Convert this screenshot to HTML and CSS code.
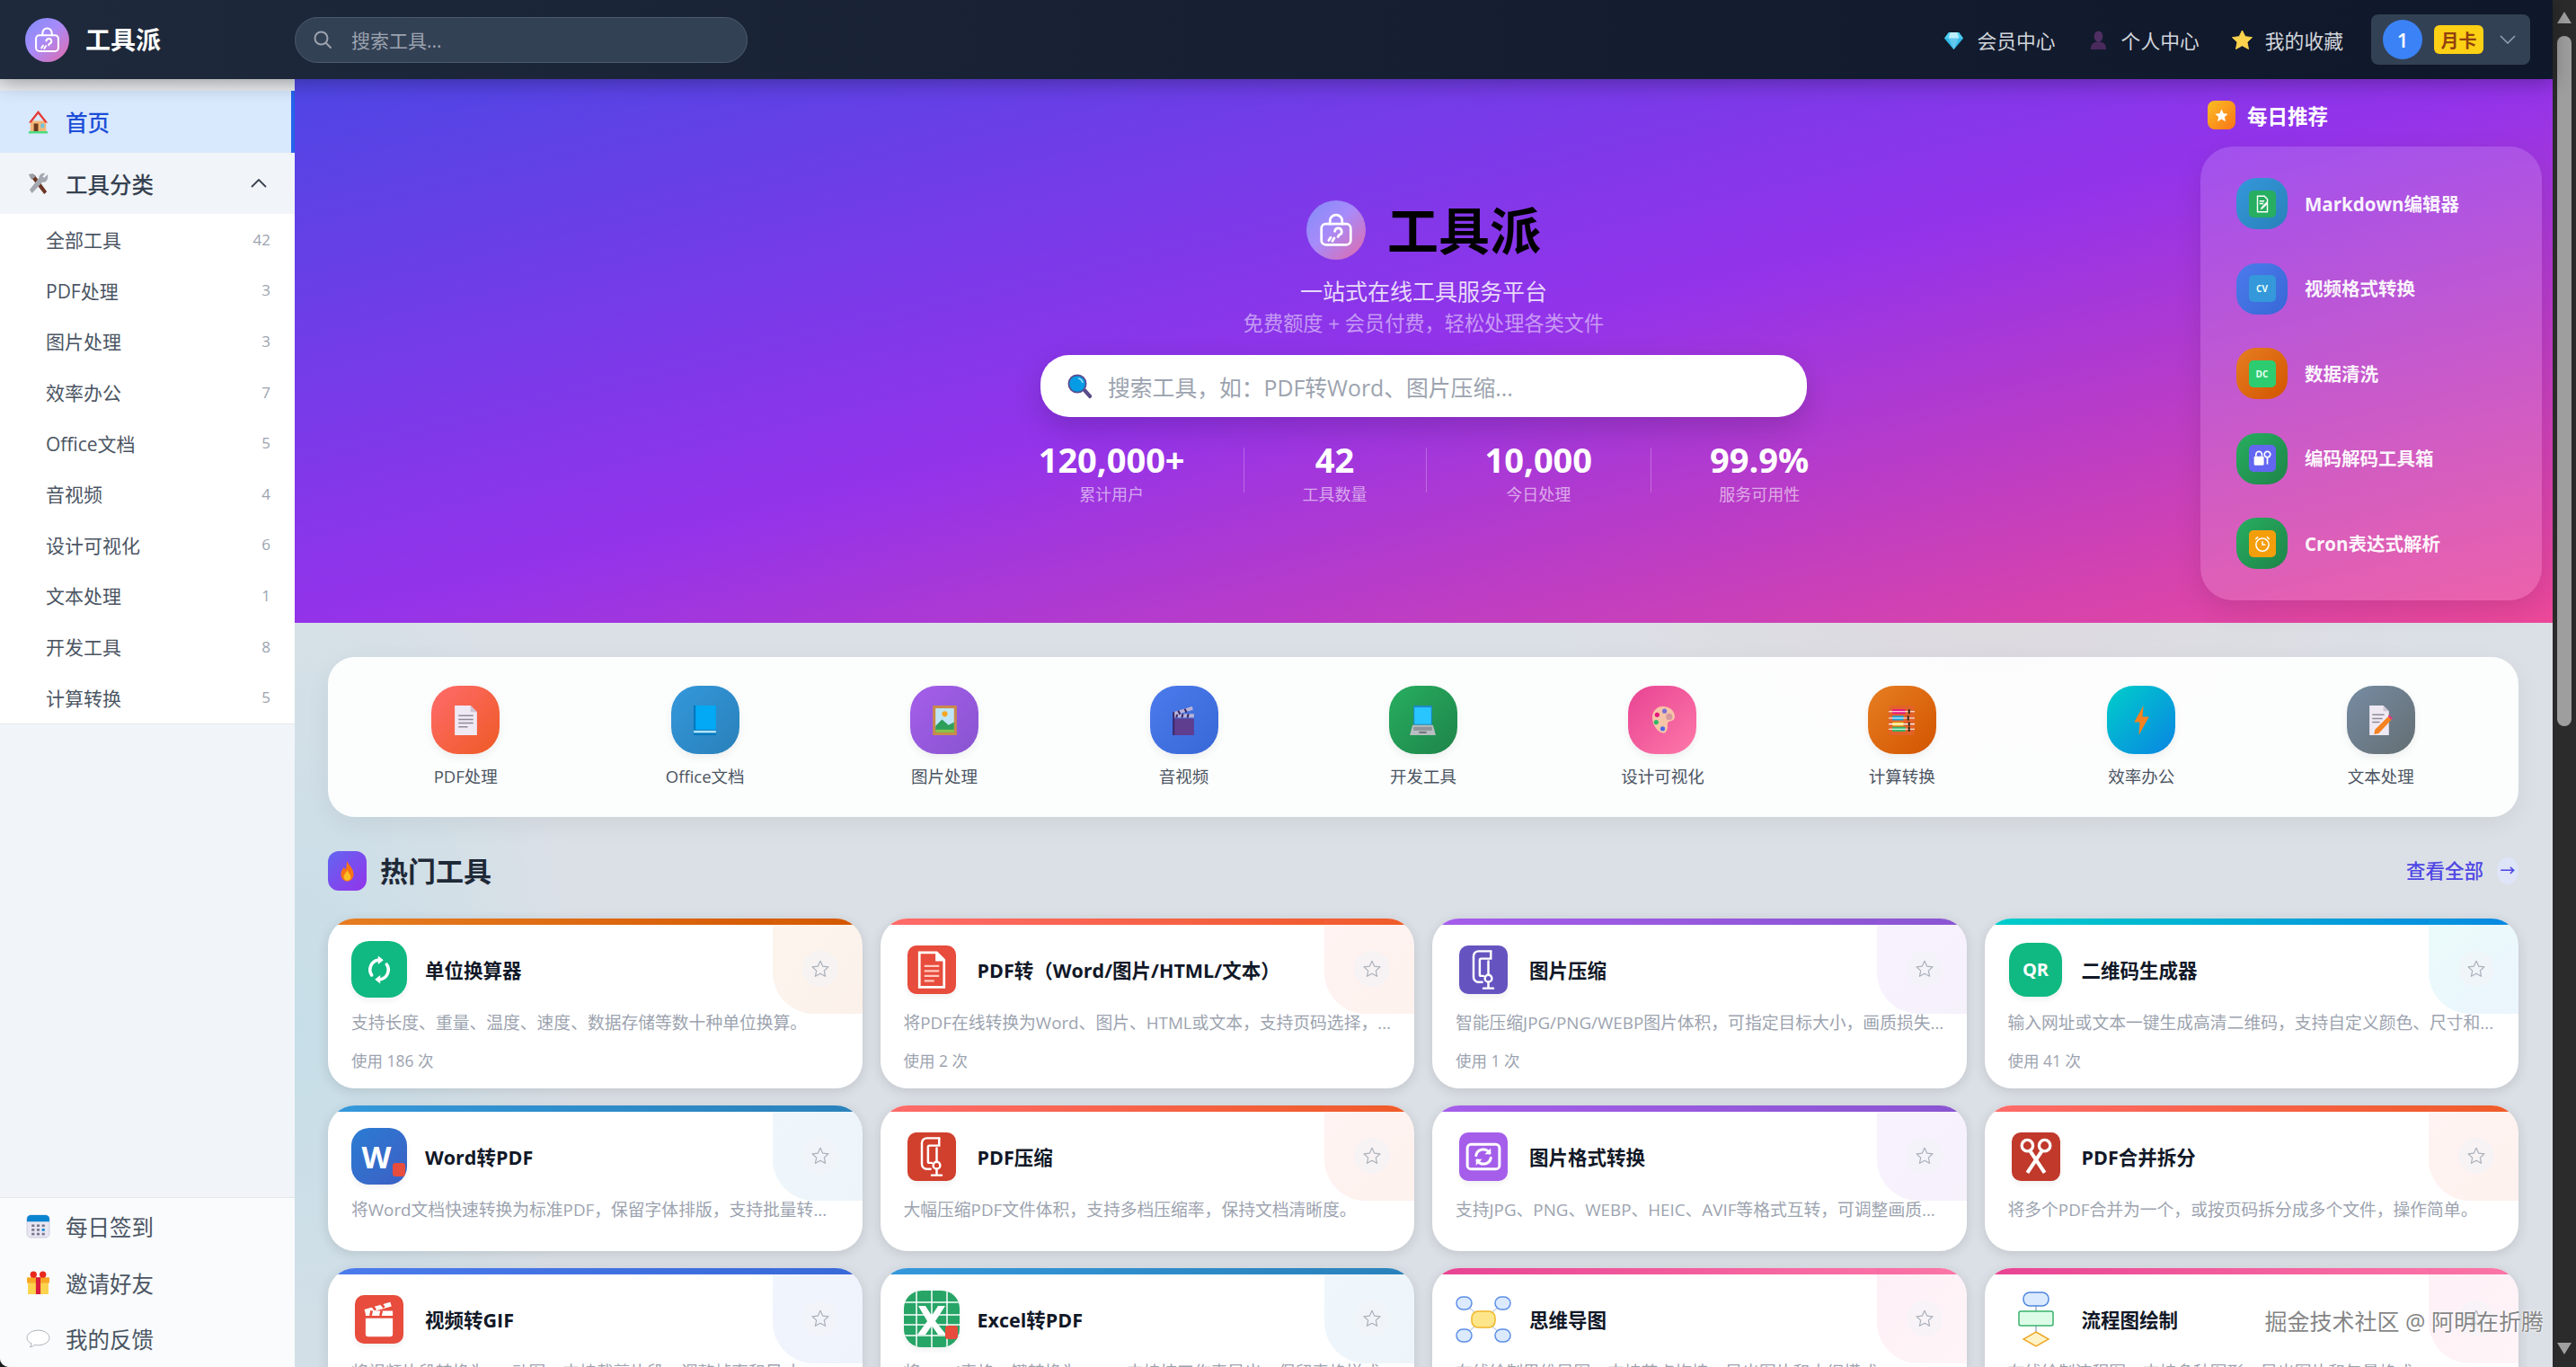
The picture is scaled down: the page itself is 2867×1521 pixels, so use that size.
FILE: index.html
```html
<!DOCTYPE html>
<html lang="zh-CN">
<head>
    <title>工具派</title>
    <meta charset="utf-8">
    <link rel="stylesheet" href="styles.css">
</head>
<body>
<svg class="sprite" xmlns="http://www.w3.org/2000/svg">
    <symbol id="i-logo" viewBox="0 0 28 28">
        <g fill="none" stroke="#fff" stroke-width="2" stroke-linecap="round">
            <rect x="2" y="9" width="24" height="17" rx="3.5"/>
            <path d="M9 9V6.500a5 5 0 0 1 10 0V9"/>
            <path d="M13 15a2.800 2.800 0 1 1 3.500 3l-1 1.500M8 22.500l1.500-2.500M11 23l1.500-2.500"/>
        </g>
    </symbol>
    <symbol id="i-star" viewBox="0 0 24 24">
        <path d="M12 2.500l2.900 6.300 6.900.8-5.100 4.700 1.400 6.800-6.100-3.400-6.100 3.400 1.400-6.800-5.100-4.700 6.900-.8z" fill="none" stroke="#aab0ba" stroke-width="1.300" stroke-linejoin="round"/>
    </symbol>
    <symbol id="i-clamp" viewBox="0 0 32 32">
        <g fill="none" stroke="#fff" stroke-width="1.800" stroke-linecap="round">
            <path d="M22 1h-10a4 4 0 0 0-4 4v17a4 4 0 0 0 4 4h3"/>
            <path d="M22 1v6h-8a1 1 0 0 0-1 1v12a1 1 0 0 0 1 1h2"/>
            <path d="M20 9v11"/>
            <circle cx="20" cy="23" r="2.800"/>
            <path d="M20 26v4M16 31h8"/>
        </g>
    </symbol>
</svg>

<div class="app">
<div class="page">
    <header class="topbar">
        <div class="brand">
            <span class="logo-dot"><svg class="logo-glyph"><use href="#i-logo"/></svg></span>
            <span class="brand-name">工具派</span>
        </div>
        <div class="top-search">
            <svg class="top-search-icon" viewBox="0 0 24 24" fill="none" stroke="#9ca3af" stroke-width="2" stroke-linecap="round"><circle cx="10.500" cy="10.500" r="7"/><path d="M16 16l5 5"/></svg>
            <span>搜索工具...</span>
        </div>
        <nav class="top-links">
            <a class="top-link">
                <svg viewBox="0 0 24 24"><path d="M6 3h12l5 7-11 13L1 10z" fill="#4fd0f5"/><path d="M8 3h8l2 7-6 13-6-13z" fill="#bdefff"/><path d="M1 10h22l-11 13z" fill="#1aa8e0" opacity=".55"/></svg>
                会员中心
            </a>
            <a class="top-link">
                <svg viewBox="0 0 24 24"><ellipse cx="12" cy="8" rx="5" ry="6.500" fill="#4f2f63"/><path d="M3 23c0-6 3-9 9-9s9 3 9 9z" fill="#4a2a5c"/></svg>
                个人中心
            </a>
            <a class="top-link">
                <svg viewBox="0 0 24 24"><path d="M12 1l3.500 7 8 1-5.800 5.500 1.600 8-7.300-4-7.300 4 1.600-8L.5 9l8-1z" fill="#fcd34d" stroke="#fcd34d" stroke-linejoin="round"/></svg>
                我的收藏
            </a>
        </nav>
        <div class="user-box">
            <span class="avatar">1</span>
            <span class="plan">月卡</span>
            <svg class="user-caret" viewBox="0 0 18 10" fill="none" stroke="#94a3b8" stroke-width="1.500"><path d="M1 1l8 8 8-8"/></svg>
        </div>
    </header>

    <div class="layout">
        <aside class="sidebar">
            <div class="side-top">
                <a class="side-home">
                    <svg class="side-icon" viewBox="0 0 28 28"><path d="M5 13h18v12H5z" fill="#f3b577"/><path d="M14 1L3 15h3l8-10 8 10h3z" fill="#e53935"/><path d="M9 16h5v9H9z" fill="#6d3b1f"/><path d="M17 16h4v5h-4z" fill="#6fc3df"/><path d="M3 25h22v2.500H3z" fill="#4ade80"/></svg>
                    首页
                </a>
                <div class="side-group">
                    <svg class="side-icon" viewBox="0 0 28 28"><path d="M4 3l6 1 14 19-3 3L7 8z" fill="#6d3524"/><path d="M25 3l-4 4-2-1 3-4c-3-1-7 1-7 5l-11 14 3 4 12-13c4 1 7-3 6-9z" fill="#a4a8b0"/><path d="M3 3l5-1 3 4-5 3z" fill="#9b9ea6"/></svg>
                    <span class="side-group-name">工具分类</span>
                    <svg class="side-caret" viewBox="0 0 18 10" fill="none" stroke="#374151" stroke-width="1.800"><path d="M1 9l8-8 8 8"/></svg>
                </div>
                <ul class="side-list">
                    <li><span>全部工具</span><em>42</em></li>
                    <li><span>PDF处理</span><em>3</em></li>
                    <li><span>图片处理</span><em>3</em></li>
                    <li><span>效率办公</span><em>7</em></li>
                    <li><span>Office文档</span><em>5</em></li>
                    <li><span>音视频</span><em>4</em></li>
                    <li><span>设计可视化</span><em>6</em></li>
                    <li><span>文本处理</span><em>1</em></li>
                    <li><span>开发工具</span><em>8</em></li>
                    <li><span>计算转换</span><em>5</em></li>
                </ul>
            </div>
            <div class="side-foot">
                <a class="foot-link">
                    <svg class="side-icon" viewBox="0 0 26 26"><rect x="1" y="1" width="24" height="24" rx="4" fill="#e9e6f2" stroke="#c9c6d6" stroke-width=".8"/><path d="M1 8V5a4 4 0 0 1 4-4h16a4 4 0 0 1 4 4v3z" fill="#0a84d0"/><g fill="#77758c"><rect x="6" y="11" width="3" height="2.500"/><rect x="11.500" y="11" width="3" height="2.500"/><rect x="17" y="11" width="3" height="2.500"/><rect x="6" y="15.500" width="3" height="2.500"/><rect x="11.500" y="15.500" width="3" height="2.500"/><rect x="6" y="20" width="3" height="2.500"/><rect x="11.500" y="20" width="3" height="2.500"/><rect x="17" y="20" width="3" height="2.500"/></g><rect x="17" y="15.500" width="3" height="2.500" fill="#0a84d0"/></svg>
                    每日签到
                </a>
                <a class="foot-link">
                    <svg class="side-icon" viewBox="0 0 26 26"><path d="M2 12h22v13H2z" fill="#fcd34d"/><path d="M1 7h24v6H1z" fill="#f9a825"/><path d="M10.500 7h5v18h-5z" fill="#d81b3c"/><circle cx="8" cy="4" r="3.500" fill="#e8291c"/><circle cx="18" cy="4" r="3.500" fill="#e8291c"/></svg>
                    邀请好友
                </a>
                <a class="foot-link">
                    <svg class="side-icon" viewBox="0 0 26 26"><path d="M13 4C6.500 4 1 7.500 1 12c0 2.800 2 5 5 6.300-.2 1.500-1 2.600-1.800 3.500 2.200-.1 4-1 5.400-2.300 1.100.3 2.200.5 3.400.5 6.500 0 12-3.500 12-8S19.500 4 13 4z" fill="#fff" stroke="#a8acb4" stroke-width=".9"/></svg>
                    我的反馈
                </a>
            </div>
        </aside>

        <main class="main">
            <section class="hero">
                <div class="hero-title">
                    <span class="hero-logo"><svg class="hero-glyph"><use href="#i-logo"/></svg></span>
                    <h1>工具派</h1>
                </div>
                <p class="hero-sub">一站式在线工具服务平台</p>
                <p class="hero-note">免费额度 + 会员付费，轻松处理各类文件</p>
                <div class="hero-search">
                    <svg viewBox="0 0 28 28"><path d="M17 19l3-3 7 8c1 1.500-1.500 4-3 3z" fill="#5b4b8a"/><circle cx="11" cy="11" r="10.500" fill="#5b4b8a"/><circle cx="11" cy="11" r="8.800" fill="#059be5"/><path d="M12 5a6 6 0 0 1 5 5" stroke="#9fe0ff" stroke-width="1.500" fill="none"/></svg>
                    <span>搜索工具，如：PDF转Word、图片压缩...</span>
                </div>
                <div class="stats">
                    <div class="stat"><b>120,000+</b><span>累计用户</span></div>
                    <i class="stat-line"></i>
                    <div class="stat"><b>42</b><span>工具数量</span></div>
                    <i class="stat-line"></i>
                    <div class="stat"><b>10,000</b><span>今日处理</span></div>
                    <i class="stat-line"></i>
                    <div class="stat"><b>99.9%</b><span>服务可用性</span></div>
                </div>

                <div class="daily">
                    <div class="daily-head">
                        <span class="daily-star"><svg viewBox="0 0 24 24"><path d="M12 3l2.700 6 6.300.7-4.700 4.300 1.300 6.400-5.600-3.200-5.600 3.200 1.300-6.400L3 9.700 9.300 9z" fill="#fff"/></svg></span>
                        每日推荐
                    </div>
                    <div class="daily-panel">
                        <a class="daily-item">
                            <span class="daily-icon g-blue"><span class="daily-mark mark-green"><svg viewBox="0 0 20 20" fill="none" stroke="#fff" stroke-width="1.300"><path d="M5 2h7l3 3v13H5z"/><path d="M7 7h5M7 9.500h4"/><path d="M8 16l1-3 5-5 1.500 1.500-5 5z" fill="#fff" stroke="none"/></svg></span></span>
                            Markdown编辑器
                        </a>
                        <a class="daily-item">
                            <span class="daily-icon g-indigo"><span class="daily-mark mark-sky">CV</span></span>
                            视频格式转换
                        </a>
                        <a class="daily-item">
                            <span class="daily-icon g-orange"><span class="daily-mark mark-mint">DC</span></span>
                            数据清洗
                        </a>
                        <a class="daily-item">
                            <span class="daily-icon g-green"><span class="daily-mark mark-violet"><svg viewBox="0 0 20 20" fill="#fff"><rect x="1.500" y="8" width="10" height="9" rx="1"/><path d="M3.500 8V6a3 3 0 0 1 6 0v2" fill="none" stroke="#fff" stroke-width="1.500"/><circle cx="15" cy="6" r="3" fill="none" stroke="#fff" stroke-width="1.500"/><path d="M14.200 8.500h1.600V16h-1.600z"/></svg></span></span>
                            编码解码工具箱
                        </a>
                        <a class="daily-item">
                            <span class="daily-icon g-green"><span class="daily-mark mark-amber"><svg viewBox="0 0 20 20" fill="none" stroke="#fff" stroke-width="1.400"><circle cx="10" cy="11" r="6.500"/><path d="M10 7.500V11h3M3 5.500L5.500 3M17 5.500L14.500 3"/></svg></span></span>
                            Cron表达式解析
                        </a>
                    </div>
                </div>
            </section>

            <div class="content">
                <section class="quick">
                    <a class="quick-item">
                        <span class="quick-icon g-red"><svg viewBox="0 0 32 32"><path d="M4 0h17l7 7v25H4z" fill="#efe9f3"/><path d="M21 0l7 7h-7z" fill="#cdc4d6"/><path d="M8 11h16M8 15h16M8 19h16M8 23h10" stroke="#8f8a99" stroke-width="1.500"/></svg></span>
                        <span class="quick-name">PDF处理</span>
                    </a>
                    <a class="quick-item">
                        <span class="quick-icon g-blue"><svg viewBox="0 0 32 32"><path d="M4 0h24v32H4z" fill="#0277bd"/><path d="M6 0h22v26H6z" fill="#03a9f4"/><path d="M4 27h24v2.500H4z" fill="#b3e5fc"/></svg></span>
                        <span class="quick-name">Office文档</span>
                    </a>
                    <a class="quick-item">
                        <span class="quick-icon g-purple"><svg viewBox="0 0 32 32"><path d="M3 0h26v32H3z" fill="#c98a4b"/><path d="M6 3h20v26H6z" fill="#bfe6f7"/><circle cx="16" cy="9" r="3" fill="#f5a623"/><path d="M6 22l7-7 7 6 6-3v11H6z" fill="#2e9e5b"/><path d="M6 26h20v3H6z" fill="#8bc34a"/></svg></span>
                        <span class="quick-name">图片处理</span>
                    </a>
                    <a class="quick-item">
                        <span class="quick-icon g-indigo"><svg viewBox="0 0 32 32"><path d="M5 14h22v18H5z" fill="#5f3d8f"/><path d="M5 9h22v4H5z" fill="#b9b3d6"/><path d="M9 9l-1 4M15 9l-1 4M21 9l-1 4" stroke="#39276b" stroke-width="2"/><path d="M5 7l20-6 1 3.500-20 6z" fill="#b9b3d6"/><path d="M10 5.500l2 4M17 3.500l2 4" stroke="#39276b" stroke-width="2"/><path d="M4 7h2v25H4z" fill="#39276b"/></svg></span>
                        <span class="quick-name">音视频</span>
                    </a>
                    <a class="quick-item">
                        <span class="quick-icon g-green"><svg viewBox="0 0 32 32"><path d="M6 0h20v21H6z" fill="#1e88c9"/><path d="M7 2h18v18H7z" fill="#29c5ff"/><path d="M5 21h22l3 11H2z" fill="#b8bec2"/><path d="M6 23h20v4H6z" fill="#8e9498"/><path d="M12 28h8v2h-8z" fill="#70767a"/></svg></span>
                        <span class="quick-name">开发工具</span>
                    </a>
                    <a class="quick-item">
                        <span class="quick-icon g-pink"><svg viewBox="0 0 32 32"><path d="M16 1c8 0 13 5 13 11 0 5-5 4-7 6-2 2 1 7-3 11-4 3-13-4-14-14C4 7 9 1 16 1z" fill="#f7c4a8"/><circle cx="18" cy="6" r="2.500" fill="#7c6fd6"/><circle cx="10" cy="10" r="2.500" fill="#e6157d"/><circle cx="9" cy="18" r="2.500" fill="#2fb86a"/><circle cx="16" cy="25" r="2.500" fill="#4a6ae8"/><circle cx="23" cy="12" r="3.500" fill="#d89aa0"/></svg></span>
                        <span class="quick-name">设计可视化</span>
                    </a>
                    <a class="quick-item">
                        <span class="quick-icon g-orange"><svg viewBox="0 0 32 32"><rect x="2" y="0" width="28" height="32" rx="4" fill="#e2622a"/><path d="M6 4h14v5H6z" fill="#e6157d"/><path d="M6 11h12v5H6z" fill="#1aa0d8"/><path d="M6 18h12v4H6z" fill="#f5cf3a"/><path d="M6 23h14v5H6z" fill="#2fb86a"/><path d="M2 6.500h28M2 13.500h28M2 20h28M2 25.500h28" stroke="#fff" stroke-width="1"/><path d="M24 4v5M23 11v5M24 18v4M24 23v5" stroke="#3b2a1a" stroke-width="2"/></svg></span>
                        <span class="quick-name">计算转换</span>
                    </a>
                    <a class="quick-item">
                        <span class="quick-icon g-teal"><svg viewBox="0 0 32 32"><path d="M18 0L8 18h6l-1 14 11-20h-7z" fill="#f58220"/></svg></span>
                        <span class="quick-name">效率办公</span>
                    </a>
                    <a class="quick-item">
                        <span class="quick-icon g-slate"><svg viewBox="0 0 32 32"><path d="M4 0h15l6 6v26H4z" fill="#efe9f3"/><path d="M19 0l6 6h-6z" fill="#cdc4d6"/><path d="M7 10h13M7 14h11M7 18h8" stroke="#8f8a99" stroke-width="1.500"/><path d="M25 10l4 3.500-1.500 2L24 12z" fill="#e6357d"/><path d="M24 12l3.500 3.500L14 30l-5 1 1-5z" fill="#f58220"/></svg></span>
                        <span class="quick-name">文本处理</span>
                    </a>
                </section>

                <div class="section-head">
                    <span class="section-mark"><svg viewBox="0 0 24 32"><path d="M12 1c1 6 9 10 9 19 0 6-4 10-9 10s-9-4-9-10c0-5 3-7 4-10 1 2 2 3 3 3 1-4 1-8 2-12z" fill="#f97316"/><path d="M12 14c1 4 5 6 5 10 0 3-2 5-5 5s-5-2-5-5c0-4 4-6 5-10z" fill="#fbbf24"/></svg></span>
                    <h2>热门工具</h2>
                    <a class="see-all">查看全部<span class="see-all-arrow">→</span></a>
                </div>

                <div class="tool-grid">
                    <article class="tool-card g-orange">
                        <div class="tool-head">
                            <span class="tool-icon"><span class="tool-tile tile-full tile-emerald"><svg viewBox="0 0 32 32" fill="none" stroke="#fff" stroke-width="3" stroke-linecap="round"><path d="M9 21a9 9 0 0 1 6-14"/><path d="M23 11a9 9 0 0 1-6 14"/><path d="M15 3v8l5-4zM17 29v-8l-5 4z" fill="#fff" stroke="none"/></svg></span></span>
                            <h3>单位换算器</h3>
                        </div>
                        <p class="tool-desc">支持长度、重量、温度、速度、数据存储等数十种单位换算。</p>
                        <p class="tool-meta">使用 186 次</p>
                        <span class="fav"><svg><use href="#i-star"/></svg></span>
                    </article>
                    <article class="tool-card g-red">
                        <div class="tool-head">
                            <span class="tool-icon"><span class="tool-tile tile-red"><svg viewBox="0 0 32 32" fill="none" stroke="#fff" stroke-width="2"><path d="M6 2h14l6 6v22H6z"/><path d="M20 2v6h6" fill="#fff"/><path d="M10 13h12M10 17h12M10 21h12M10 25h8" stroke="#ffc9bf" stroke-width="1.600"/></svg></span></span>
                            <h3>PDF转（Word/图片/HTML/文本）</h3>
                        </div>
                        <p class="tool-desc">将PDF在线转换为Word、图片、HTML或文本，支持页码选择，...</p>
                        <p class="tool-meta">使用 2 次</p>
                        <span class="fav"><svg><use href="#i-star"/></svg></span>
                    </article>
                    <article class="tool-card g-purple">
                        <div class="tool-head">
                            <span class="tool-icon"><span class="tool-tile tile-iris"><svg><use href="#i-clamp"/></svg></span></span>
                            <h3>图片压缩</h3>
                        </div>
                        <p class="tool-desc">智能压缩JPG/PNG/WEBP图片体积，可指定目标大小，画质损失...</p>
                        <p class="tool-meta">使用 1 次</p>
                        <span class="fav"><svg><use href="#i-star"/></svg></span>
                    </article>
                    <article class="tool-card g-teal">
                        <div class="tool-head">
                            <span class="tool-icon"><span class="tool-tile tile-full tile-emerald tile-qr">QR</span></span>
                            <h3>二维码生成器</h3>
                        </div>
                        <p class="tool-desc">输入网址或文本一键生成高清二维码，支持自定义颜色、尺寸和...</p>
                        <p class="tool-meta">使用 41 次</p>
                        <span class="fav"><svg><use href="#i-star"/></svg></span>
                    </article>

                    <article class="tool-card g-blue">
                        <div class="tool-head">
                            <span class="tool-icon"><span class="tool-tile tile-full tile-word">W<i class="tile-dot"></i></span></span>
                            <h3>Word转PDF</h3>
                        </div>
                        <p class="tool-desc">将Word文档快速转换为标准PDF，保留字体排版，支持批量转...</p>
                        <span class="fav"><svg><use href="#i-star"/></svg></span>
                    </article>
                    <article class="tool-card g-red">
                        <div class="tool-head">
                            <span class="tool-icon"><span class="tool-tile tile-brick"><svg><use href="#i-clamp"/></svg></span></span>
                            <h3>PDF压缩</h3>
                        </div>
                        <p class="tool-desc">大幅压缩PDF文件体积，支持多档压缩率，保持文档清晰度。</p>
                        <span class="fav"><svg><use href="#i-star"/></svg></span>
                    </article>
                    <article class="tool-card g-purple">
                        <div class="tool-head">
                            <span class="tool-icon"><span class="tool-tile tile-violet"><svg viewBox="0 0 32 32" fill="none" stroke="#fff" stroke-width="2.200"><rect x="3" y="6" width="26" height="20" rx="3"/><path d="M10 15a6 6 0 0 1 11-2M22 17a6 6 0 0 1-11 2" stroke-linecap="round"/><path d="M22 9v5h-5zM10 23v-5h5z" fill="#fff" stroke="none"/></svg></span></span>
                            <h3>图片格式转换</h3>
                        </div>
                        <p class="tool-desc">支持JPG、PNG、WEBP、HEIC、AVIF等格式互转，可调整画质...</p>
                        <span class="fav"><svg><use href="#i-star"/></svg></span>
                    </article>
                    <article class="tool-card g-red">
                        <div class="tool-head">
                            <span class="tool-icon"><span class="tool-tile tile-crimson"><svg viewBox="0 0 32 32" fill="none" stroke="#fff" stroke-width="2.400"><circle cx="9" cy="7" r="4.500"/><circle cx="23" cy="7" r="4.500"/><path d="M11 11l12 18M21 11L9 29" stroke-width="3"/></svg></span></span>
                            <h3>PDF合并拆分</h3>
                        </div>
                        <p class="tool-desc">将多个PDF合并为一个，或按页码拆分成多个文件，操作简单。</p>
                        <span class="fav"><svg><use href="#i-star"/></svg></span>
                    </article>

                    <article class="tool-card g-indigo">
                        <div class="tool-head">
                            <span class="tool-icon"><span class="tool-tile tile-red"><svg viewBox="0 0 32 32" fill="#fff"><path d="M5 15h22v13a2 2 0 0 1-2 2H7a2 2 0 0 1-2-2z"/><path d="M5 9h22v4H5z"/><path d="M4 8l21-6 1 3.500-21 6z"/><path d="M10 4.500l3 4M17 2.500l3 4M10 9l-1 4M18 9l-1 4" stroke="#e74c3c" stroke-width="2"/></svg></span></span>
                            <h3>视频转GIF</h3>
                        </div>
                        <p class="tool-desc">将视频片段转换为GIF动图，支持裁剪片段，调整帧率和尺寸。</p>
                        <span class="fav"><svg><use href="#i-star"/></svg></span>
                    </article>
                    <article class="tool-card g-blue">
                        <div class="tool-head">
                            <span class="tool-icon"><span class="tool-tile tile-full tile-excel"><svg viewBox="0 0 62 63"><path d="M0 13h62M0 27h62M0 38h62M0 50h62M14 0v63M31 0v63M48 0v63" stroke="#fff" stroke-width="1.500"/><path d="M16 17h8l7 11 7-11h8L35 34l12 15h-9l-7-10-7 10h-9l11-15z" fill="#fff"/></svg><i class="tile-dot"></i></span></span>
                            <h3>Excel转PDF</h3>
                        </div>
                        <p class="tool-desc">将Excel表格一键转换为PDF，支持按工作表导出，保留表格样式。</p>
                        <span class="fav"><svg><use href="#i-star"/></svg></span>
                    </article>
                    <article class="tool-card g-pink">
                        <div class="tool-head">
                            <span class="tool-icon"><svg class="art-mind" viewBox="0 0 62 52"><path d="M9 8l22 18M53 8L31 26M9 44l22-18M53 44L31 26" stroke="#c9d3e0" stroke-width="1.500"/><g fill="#dbeafe" stroke="#5b8ee6" stroke-width="1.500"><rect x="1" y="1" width="17" height="14" rx="7"/><rect x="44" y="1" width="17" height="14" rx="7"/><rect x="1" y="37" width="17" height="14" rx="7"/><rect x="44" y="37" width="17" height="14" rx="7"/></g><rect x="18" y="17" width="26" height="18" rx="7" fill="#fde68a" stroke="#f0b429" stroke-width="1.500"/></svg></span>
                            <h3>思维导图</h3>
                        </div>
                        <p class="tool-desc">在线绘制思维导图，支持节点拖拽，导出图片和大纲模式。</p>
                        <span class="fav"><svg><use href="#i-star"/></svg></span>
                    </article>
                    <article class="tool-card g-pink">
                        <div class="tool-head">
                            <span class="tool-icon"><svg class="art-flow" viewBox="0 0 42 62"><path d="M21 16v30" stroke="#9fb0c8" stroke-width="1.500"/><rect x="7" y="1" width="28" height="15" rx="7" fill="#dbeafe" stroke="#4f86e0" stroke-width="1.500"/><rect x="2" y="22" width="38" height="16" rx="2" fill="#dcfce7" stroke="#37b26c" stroke-width="1.500"/><path d="M21 45l14 8-14 8-14-8z" fill="#fef3c7" stroke="#f0a929" stroke-width="1.500"/></svg></span>
                            <h3>流程图绘制</h3>
                        </div>
                        <p class="tool-desc">在线绘制流程图，支持多种图形，导出图片和矢量格式。</p>
                        <span class="fav"><svg><use href="#i-star"/></svg></span>
                    </article>
                </div>
            </div>
        </main>
    </div>
</div>
<div class="scroll-rail">
    <i class="scroll-up"></i>
    <i class="scroll-thumb"></i>
    <i class="scroll-down"></i>
</div>
<div class="watermark">掘金技术社区 @ 阿明在折腾</div>
</div>
</body>
</html>
```

FILE: styles.css
```css
html,body{height:100%;margin:0;padding:0;}
body{background:#1c1c1c;overflow:hidden;font-family:"Open Sans","Noto Sans CJK SC",sans-serif;color:#1f2937;}
h1,h2,h3,p,ul{margin:0;padding:0;}
a{color:inherit;text-decoration:none;}
i,em{font-style:normal;}
svg{display:block;}
.sprite{position:absolute;width:0;height:0;}

.app{display:flex;height:100vh;overflow:hidden;}
.page{flex:1;min-width:0;display:flex;flex-direction:column;}

/* top bar */
.topbar{height:88px;flex:none;display:flex;align-items:center;padding:0 25px 0 28px;background:linear-gradient(90deg,#1e293b,#0f172a);box-shadow:0 4px 22px rgba(0,0,0,.3);position:relative;z-index:3;box-sizing:border-box;}
.brand{width:300px;flex:none;display:flex;align-items:center;gap:18px;}
.logo-dot{width:49px;height:49px;border-radius:50%;background:linear-gradient(135deg,#818cf8,#a78bfa 45%,#e26aa8);display:flex;align-items:center;justify-content:center;}
.logo-glyph{width:29px;height:29px;}
.brand-name{font-size:28px;font-weight:700;color:#fff;line-height:1;}
.top-search{width:504px;height:51px;box-sizing:border-box;display:flex;align-items:center;gap:20px;padding-left:18px;background:#334155;border:1px solid #4b5a70;border-radius:26px;color:#9ca3af;font-size:21px;}
.top-search-icon{width:24px;height:24px;}
.top-links{margin-left:auto;display:flex;gap:36px;}
.top-link{display:flex;align-items:center;gap:14px;color:#d1d5db;font-size:21.800px;white-space:nowrap;}
.top-link svg{width:23px;height:23px;}
.user-box{margin-left:31px;width:177px;height:56px;box-sizing:border-box;display:flex;align-items:center;padding:0 16px 0 13px;background:#334155;border-radius:8px;}
.avatar{width:44px;height:44px;border-radius:50%;background:#3b82f6;color:#fff;font-size:22px;font-weight:600;display:flex;align-items:center;justify-content:center;}
.plan{margin-left:13px;width:55px;height:32px;border-radius:6px;background:#fcd015;color:#92400e;font-size:20px;font-weight:700;display:flex;align-items:center;justify-content:center;}
.user-caret{margin-left:auto;width:18px;height:10px;}

.layout{flex:1;min-height:0;display:flex;}

/* sidebar */
.sidebar{width:328px;flex:none;display:flex;flex-direction:column;background:#f1f5f9;border-bottom-left-radius:10px;overflow:hidden;}
.side-top{padding-top:13px;background:linear-gradient(#dfe3e5,#eceef0 13px,transparent 13px);}
.side-icon{width:27px;height:27px;flex:none;}
.side-home{height:69px;display:flex;align-items:center;gap:17px;padding-left:29px;background:#d8e8fd;border-right:4px solid #2563eb;box-sizing:border-box;color:#1d4ed8;font-size:24.500px;font-weight:500;}
.side-group{height:68px;display:flex;align-items:center;gap:17px;padding:0 31px 0 29px;color:#374151;font-size:24.500px;font-weight:500;}
.side-group-name{flex:1;}
.side-caret{width:18px;height:10px;}
.side-list{list-style:none;background:#fff;border-bottom:1px solid #e5e7eb;padding-bottom:1px;}
.side-list li{height:56.600px;display:flex;align-items:center;justify-content:space-between;padding:0 27px 0 51px;font-size:21px;color:#4b5563;}
.side-list em{font-size:17px;color:#9ca3af;}
.side-foot{margin-top:auto;height:189px;box-sizing:border-box;background:#f9fbfd;border-top:1px solid #e5e7eb;display:flex;flex-direction:column;}
.foot-link{height:63px;display:flex;align-items:center;gap:17px;padding-left:29px;font-size:24.500px;color:#4b5563;}

/* main column */
.main{flex:1;min-width:0;overflow:hidden;background:radial-gradient(ellipse 320px 600px at 0 74%,#c6dee8,transparent),radial-gradient(ellipse 500px 300px at 75% 38%,#ddd8de,transparent),#dbe0e6;}
.hero{height:605px;position:relative;box-sizing:border-box;padding-top:135px;display:flex;flex-direction:column;align-items:center;background:linear-gradient(to bottom right,#4f46e5,#9333ea 50%,#ec4899);}
.hero-title{display:flex;align-items:center;gap:24px;height:66px;}
.hero-logo{width:66px;height:66px;border-radius:50%;background:linear-gradient(135deg,#818cf8,#a78bfa 45%,#e26aa8);display:flex;align-items:center;justify-content:center;}
.hero-glyph{width:38px;height:38px;}
.hero-title h1{font-size:57px;font-weight:700;color:#000;line-height:1;}
.hero-sub{margin-top:17px;font-size:25px;line-height:36px;color:rgba(255,255,255,.82);}
.hero-note{margin-top:3px;font-size:22.200px;line-height:30px;color:rgba(255,255,255,.5);}
.hero-search{margin-top:20px;width:853px;height:69px;box-sizing:border-box;display:flex;align-items:center;gap:17px;padding-left:30px;background:#fff;border-radius:32px;box-shadow:0 12px 32px rgba(0,0,0,.16);color:#9ca3af;font-size:24.800px;}
.hero-search svg{width:28px;height:28px;flex:none;}
.stats{margin-top:24px;display:flex;gap:65px;}
.stat{display:flex;flex-direction:column;align-items:center;}
.stat b{font-size:38px;line-height:46px;font-weight:700;color:#fff;}
.stat span{margin-top:2px;font-size:18px;line-height:28px;color:rgba(255,255,255,.58);}
.stat-line{width:1px;height:50px;margin-top:10px;background:rgba(255,255,255,.25);}

/* daily picks, laid over the hero */
.daily{position:absolute;top:24px;right:12px;width:380px;}
.daily-head{height:32px;display:flex;align-items:center;gap:13px;margin-left:8px;color:#fff;font-size:22.500px;font-weight:700;}
.daily-star{width:31px;height:32px;border-radius:8px;background:linear-gradient(135deg,#fbbf24,#f97316);display:flex;align-items:center;justify-content:center;}
.daily-star svg{width:19px;height:19px;}
.daily-panel{margin-top:19px;height:505px;box-sizing:border-box;padding:35px 20px 35px 40px;display:flex;flex-direction:column;justify-content:space-between;background:rgba(255,255,255,.15);border-radius:36px;box-shadow:0 10px 30px rgba(0,0,0,.1);}
.daily-item{display:flex;align-items:center;gap:19px;color:rgba(255,255,255,.95);font-size:20.500px;font-weight:700;line-height:54px;}
.daily-icon{width:57px;height:57px;flex:none;border-radius:22px;display:flex;align-items:center;justify-content:center;background:linear-gradient(135deg,var(--c1),var(--c2));}
.daily-mark{width:30px;height:30px;border-radius:5px;display:flex;align-items:center;justify-content:center;color:#e8fff4;font-size:10px;font-weight:700;line-height:1;}
.daily-mark svg{width:22px;height:22px;}
.mark-green{background:#27ae60;}
.mark-sky{background:#3498db;}
.mark-mint{background:#2ecc71;}
.mark-violet{background:#6366f1;}
.mark-amber{background:#f59e0b;}

/* colour families */
.g-orange{--c1:#e67e22;--c2:#d35400;}
.g-red{--c1:#ff6b6b;--c2:#ee5a24;}
.g-purple{--c1:#a55eea;--c2:#8854d0;}
.g-blue{--c1:#3498db;--c2:#2980b9;}
.g-indigo{--c1:#4b7bec;--c2:#3867d6;}
.g-green{--c1:#27ae60;--c2:#1e8449;}
.g-pink{--c1:#e84393;--c2:#fd79a8;}
.g-teal{--c1:#00cec9;--c2:#0984e3;}
.g-slate{--c1:#778ca3;--c2:#636e72;}

.content{padding:38px 38px 40px 37px;}

/* quick category strip */
.quick{height:178px;display:flex;padding:32px 20px 0;box-sizing:border-box;background:rgba(255,255,255,.92);border-radius:30px;box-shadow:0 8px 28px rgba(0,0,0,.06);}
.quick-item{flex:1;display:flex;flex-direction:column;align-items:center;}
.quick-icon{width:76px;height:76px;border-radius:30px;display:flex;align-items:center;justify-content:center;background:linear-gradient(135deg,var(--c1),var(--c2));box-shadow:0 4px 10px rgba(0,0,0,.06);}
.quick-icon svg{width:33px;height:33px;}
.quick-name{margin-top:11px;font-size:18.500px;line-height:28px;color:#4b5563;white-space:nowrap;}

/* hot tools */
.section-head{margin-top:38px;height:44px;display:flex;align-items:center;}
.section-mark{width:43px;height:44px;border-radius:12px;background:linear-gradient(135deg,#6366f1,#9333ea);display:flex;align-items:center;justify-content:center;}
.section-mark svg{width:19px;height:25px;}
.section-head h2{margin-left:15px;font-size:31px;font-weight:700;color:#1f2937;line-height:42px;}
.see-all{margin-left:auto;display:flex;align-items:center;gap:15px;color:#4f46e5;font-size:21.500px;font-weight:500;line-height:26px;}
.see-all-arrow{width:24px;height:30px;border-radius:50%;background:rgba(224,231,255,.7);font-size:17px;display:flex;align-items:center;justify-content:center;}

.tool-grid{margin-top:31px;display:grid;grid-template-columns:repeat(4,1fr);gap:19px 20px;}
.tool-card{position:relative;overflow:hidden;box-sizing:border-box;padding:25px 26px 17px;background:#fff;border-radius:30px;box-shadow:0 3px 14px rgba(0,0,0,.12);}
.tool-card::before{content:"";position:absolute;left:0;right:0;top:0;height:7px;background:linear-gradient(90deg,var(--c1),var(--c2));}
.tool-card::after{content:"";position:absolute;right:0;top:0;width:100px;height:106px;border-bottom-left-radius:46px;background:linear-gradient(135deg,var(--c1),var(--c2));opacity:.08;}
.tool-head{height:63px;display:flex;align-items:center;gap:20px;}
.tool-head h3{font-size:21.500px;font-weight:700;color:#111827;white-space:nowrap;position:relative;z-index:1;}
.tool-icon{width:62px;height:63px;flex:none;display:flex;align-items:center;justify-content:center;}
.tool-tile{width:54px;height:54px;border-radius:10px;display:flex;align-items:center;justify-content:center;position:relative;overflow:hidden;box-shadow:0 4px 6px rgba(0,0,0,.05);}
.tool-tile svg{width:44px;height:44px;}
.tile-full{width:62px;height:63px;border-radius:20px;}
.tile-full.tile-excel svg{width:62px;height:63px;}
.tile-emerald{background:#10b981;}
.tile-emerald svg{width:38px;height:38px;}
.tile-qr{width:59px;height:60px;color:#fff;font-size:20px;font-weight:700;}
.tile-red{background:#e74c3c;}
.tile-iris{background:#6554c0;}
.tile-brick{background:#d13f2d;}
.tile-violet{background:#a55eea;}
.tile-crimson{background:#c0392b;}
.tile-word{padding-right:6px;box-sizing:border-box;background:linear-gradient(135deg,#2b7cd3,#3d5fc4);color:#fff;font-size:34px;font-weight:700;}
.tile-excel{background:#27a567;}
.tile-dot{position:absolute;right:2px;bottom:9px;width:14px;height:15px;border-radius:3px;background:#e74c3c;}
.art-mind{width:62px;height:52px;flex:none;}
.art-flow{width:42px;height:62px;flex:none;}
.tool-desc{margin:14px 0 15px;height:28px;font-size:18.800px;line-height:28px;color:#9ca3af;white-space:nowrap;overflow:hidden;}
.tool-meta{font-size:17.500px;line-height:27px;color:#9ca3af;}
.fav{position:absolute;z-index:1;right:27px;top:36px;width:40px;height:40px;border-radius:50%;background:rgba(241,243,246,.6);display:flex;align-items:center;justify-content:center;}
.fav svg{width:22px;height:22px;}

/* window scrollbar as captured in the screenshot */
.scroll-rail{width:26px;flex:none;box-sizing:border-box;padding:13px 5px 14px;display:flex;flex-direction:column;background:#2b2b2b;}
.scroll-up,.scroll-down{display:block;height:13px;background:#a0a0a0;}
.scroll-up{clip-path:polygon(50% 0,100% 100%,0 100%);}
.scroll-down{margin-top:auto;clip-path:polygon(0 0,100% 0,50% 100%);}
.scroll-thumb{display:block;margin-top:14px;height:768px;border-radius:8px;background:#9e9e9e;}

.watermark{position:absolute;right:36px;top:1452px;font-size:25px;line-height:36px;color:rgba(110,110,110,.85);text-shadow:0 0 3px #fff,0 0 1px #fff;white-space:nowrap;z-index:5;}
```
